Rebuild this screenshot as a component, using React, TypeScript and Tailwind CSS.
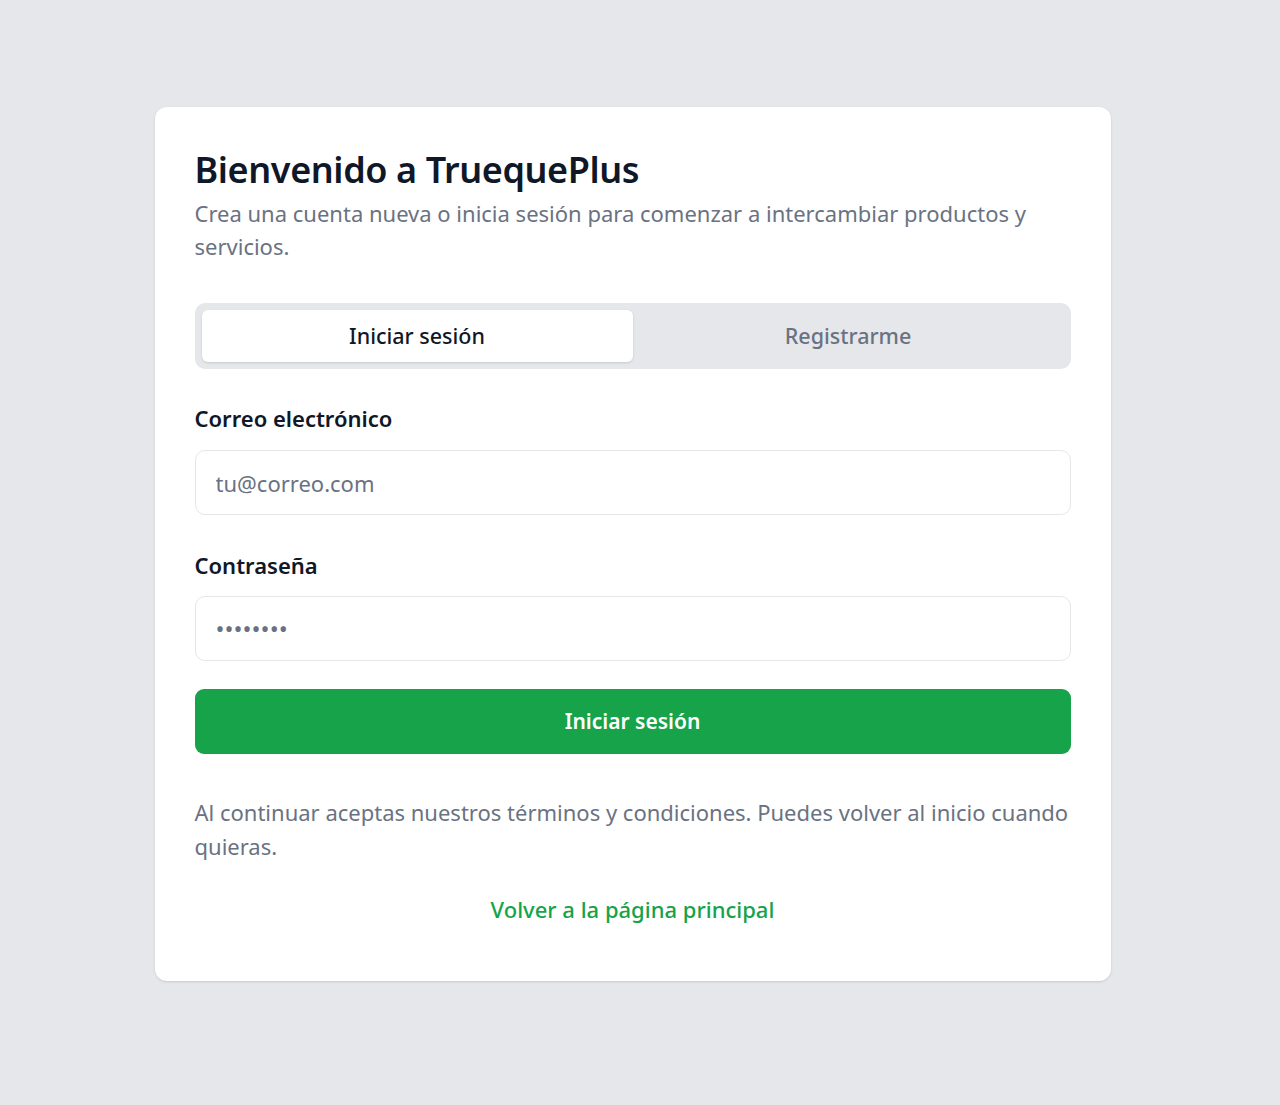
import { useState } from "react";

function App() {
  const [tab, setTab] = useState<"login" | "register">("login");

  return (
    <div className="min-h-screen bg-gray-200 flex justify-center pt-[107px] pr-[15px] font-['Noto_Sans',sans-serif]">
      <div className="w-[956px] h-fit bg-white rounded-xl shadow-sm px-10 pt-10 pb-[57px]">
        <h1 className="text-[36px] leading-[46px] font-semibold text-gray-900 tracking-[-0.4px]">
          Bienvenido a TruequePlus
        </h1>
        <p className="mt-1 text-[22px] leading-[33px] text-gray-500">
          Crea una cuenta nueva o inicia sesión para comenzar a intercambiar productos y servicios.
        </p>

        <div className="mt-10 h-[66px] bg-gray-200 rounded-[10px] p-[7px] grid grid-cols-2">
          <button
            onClick={() => setTab("login")}
            className={`rounded-md text-[21.5px] font-medium ${
              tab === "login" ? "bg-white text-gray-900 shadow-sm" : "text-gray-500"
            }`}
          >
            Iniciar sesión
          </button>
          <button
            onClick={() => setTab("register")}
            className={`rounded-md text-[21.5px] font-medium ${
              tab === "register" ? "bg-white text-gray-900 shadow-sm" : "text-gray-500"
            }`}
          >
            Registrarme
          </button>
        </div>

        <form className="mt-[34px]" onSubmit={(e) => e.preventDefault()}>
          <label className="block text-[22px] leading-[30px] font-semibold text-gray-900">
            Correo electrónico
          </label>
          <input
            type="email"
            placeholder="tu@correo.com"
            className="mt-[17px] w-full h-[65px] border border-gray-200 rounded-[10px] px-5 text-[22px] text-gray-900 placeholder:text-gray-500 outline-none"
          />

          <label className="block mt-[35px] text-[22px] leading-[30px] font-semibold text-gray-900">
            Contraseña
          </label>
          <input
            type="password"
            defaultValue="12345678"
            className="mt-4 w-full h-[65px] border border-gray-200 rounded-[10px] px-5 text-[24px] text-gray-500 outline-none"
          />

          <button
            type="submit"
            className="mt-7 w-full h-[65px] bg-[#16a34a] rounded-[9px] text-white text-[21px] font-semibold"
          >
            Iniciar sesión
          </button>
        </form>

        <p className="mt-[41px] text-[22px] leading-[34px] text-gray-500">
          Al continuar aceptas nuestros términos y condiciones. Puedes volver al inicio cuando quieras.
        </p>

        <div className="mt-[31px] text-center">
          <a href="#" className="text-[22px] leading-[30px] font-medium text-[#16a34a]">
            Volver a la página principal
          </a>
        </div>
      </div>
    </div>
  );
}

export default App;
